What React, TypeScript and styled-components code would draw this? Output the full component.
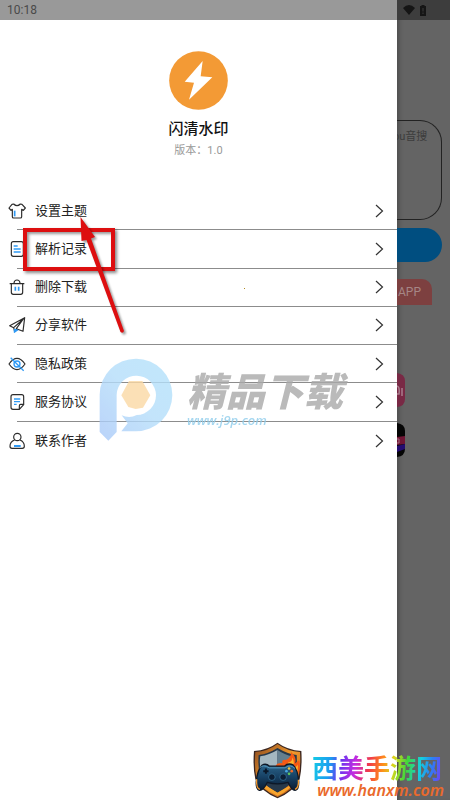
import React from "react";
import styled, { createGlobalStyle } from "styled-components";

const GlobalStyle = createGlobalStyle`
  * { box-sizing: border-box; }
  body {
    margin: 0;
    font-family: Roboto, "Noto Sans CJK SC", sans-serif;
    color: #222;
    background: #646464;
  }
`;

const Screen = styled.div`
  position: relative;
  display: flex;
  min-height: 100vh;
  overflow: hidden;
`;

const Drawer = styled.main`
  position: relative;
  flex: 1;
  min-width: 0;
  background: #fff;
`;

const StatusBar = styled.div<{ $dim?: boolean }>`
  display: flex;
  align-items: center;
  gap: 4px;
  height: 20px;
  padding: 0 ${(p) => (p.$dim ? "6px" : "7px")};
  background: ${(p) => (p.$dim ? "#3d3d3d" : "#999")};
  color: #4a4a4a;
  font-size: 12px;
  line-height: 20px;
`;

const Profile = styled.header`
  display: flex;
  flex-direction: column;
  align-items: center;
  padding: 31px 0;
`;

const AppName = styled.h1`
  margin: 8px 0 0;
  font-size: 15px;
  line-height: 22px;
  font-weight: 500;
  color: #111;
`;

const Version = styled.p`
  margin: 1px 0 0;
  font-size: 11px;
  line-height: 20px;
  color: #999;
`;

const Menu = styled.ul`
  display: grid;
  grid-template-rows: repeat(7, 1fr);
  height: 268px;
  margin: 0;
  padding: 0;
  list-style: none;
`;

const MenuItem = styled.li`
  display: flex;
  flex-direction: column;
`;

const MenuButton = styled.button`
  display: flex;
  flex: 1;
  align-items: center;
  gap: 9px;
  padding: 0 13px 0 8px;
  border: 0;
  background: none;
  color: #222;
  font: inherit;
  font-size: 13px;
  line-height: 20px;
  text-align: left;
`;

const Label = styled.span`
  flex: 1;
`;

const Divider = styled.hr`
  width: calc(100% - 17px);
  height: 1px;
  margin: 0 0 0 17px;
  border: 0;
  background: #8c8c8c;
`;

const Backdrop = styled.aside`
  width: 53px;
  background: #646464;
  box-shadow: inset 5px 0 4px -3px #4c4c4c;
  overflow: hidden;
`;

const LinkBox = styled.div`
  height: 100px;
  margin: 100px 8px 0 0;
  padding: 6px 0;
  border: 1px solid #222;
  border-left: 0;
  border-radius: 0 22px 22px 0;
  color: #3c3c3c;
  font-size: 11px;
  line-height: 20px;
  text-indent: -4px;
  white-space: nowrap;
  overflow: hidden;
`;

const ParseButton = styled.button`
  display: block;
  width: 45px;
  height: 34px;
  margin-top: 8px;
  border: 0;
  border-radius: 0 17px 17px 0;
  background: #004e80;
`;

const AppTag = styled.div`
  height: 26px;
  margin: 17px 18px 0 0;
  padding-left: 1px;
  border-radius: 0 10px 0 0;
  background: #7d4040;
  color: #a68686;
  font-size: 12px;
  line-height: 27px;
`;

const AppIcons = styled.div`
  display: flex;
  flex-direction: column;
  gap: 16px;
  margin-top: 68px;
`;

const RedBox = styled.div`
  position: absolute;
  left: 23px;
  top: 228px;
  width: 92px;
  height: 43px;
  border: 4px solid #dd0f10;
  box-shadow: 2px 2px 3px #0007, inset 2px 2px 3px #0006;
`;

const Arrow = styled.svg`
  position: absolute;
  left: 70px;
  top: 210px;
  filter: drop-shadow(2px 2px 1px #0006);
`;

const Speck = styled.span`
  position: absolute;
  left: 244px;
  top: 288px;
  width: 1px;
  height: 1px;
  background: #b08a20;
`;

const Watermark = styled.div`
  position: absolute;
  left: 99px;
  top: 358px;
  display: flex;
  gap: 14px;
  opacity: 0.8;
  pointer-events: none;
`;

const WatermarkText = styled.div`
  display: flex;
  flex-direction: column;
  padding-top: 10px;
  font-style: italic;
  white-space: nowrap;
`;

const WatermarkName = styled.span`
  font-family: "Noto Sans CJK SC", sans-serif;
  font-size: 39px;
  font-weight: 900;
  line-height: 43px;
  color: #a9a9a9;
`;

const WatermarkSite = styled.span`
  font-family: "Open Sans", sans-serif;
  font-size: 13px;
  font-weight: 600;
  line-height: 18px;
  color: #8fcdec;
`;

const Brand = styled.div`
  position: absolute;
  right: 4px;
  bottom: 0;
  display: flex;
  align-items: flex-start;
  gap: 9px;
`;

const BrandText = styled.div`
  display: flex;
  flex-direction: column;
  align-items: flex-end;
  padding-top: 8px;
  white-space: nowrap;
`;

const BrandName = styled.span`
  padding-top: 3px;
  margin-right: 4px;
  font-family: "Noto Sans CJK SC", sans-serif;
  font-size: 26px;
  font-weight: 700;
  line-height: 28px;
  color: transparent;
  background: linear-gradient(
    100deg,
    #14d0e4 0%, #1b9cf0 15%, #6a35f0 23%, #c42be0 34%, #f03a4a 44%,
    #ff8a1c 54%, #d8d81c 62%, #3fd83a 72%, #14cfe0 82%, #2a80f4 90%, #7a3cf4 100%
  );
  background-clip: text;
  -webkit-background-clip: text;
`;

const BrandSite = styled.span`
  padding-right: 2px;
  font-family: "Noto Sans", sans-serif;
  font-size: 16px;
  font-style: italic;
  font-weight: 600;
  line-height: 19px;
  color: #ea6a2c;
`;

const ink = "#2c2c2c";
const blue = "#2f9af5";

const shapes: Record<string, React.ReactNode> = {
  shirt: (
    <>
      <path d="M17 6 Q27 16 37 6 L42 7 L52 18 L46 25 L41 22 V44 Q41 48 37 48 H17 Q13 48 13 44 V22 L9 25 L3 18 L12 7Z" />
      <path d="M20 26 V43" stroke={blue} strokeWidth="5" />
    </>
  ),
  record: (
    <>
      <rect x="10" y="5" width="36" height="44" rx="6" />
      <path d="M17 18 H29 M17 27 H38 M17 36 H38" stroke={blue} strokeWidth="4" />
    </>
  ),
  trash: (
    <>
      <path d="M5 17 H49 M18 15 Q19 6 27 6 Q35 6 36 15 M10 17 V43 Q10 49 16 49 H38 Q44 49 44 43 V17" />
      <path d="M22 26 V38 M32 26 V38" stroke={blue} strokeWidth="5" />
    </>
  ),
  plane: (
    <>
      <path d="M50 5 L5 29 L17 35 L46 9 L25 38 L45 46 L50 5Z M17 35 L20 47 L26 39" />
      <path d="M19 40 V49 L29 42Z" fill={blue} stroke={blue} />
    </>
  ),
  eye: (
    <>
      <path d="M3 27 Q27 -7 51 27 Q27 61 3 27Z" />
      <circle cx="27" cy="27" r="9" stroke={blue} strokeWidth="4" />
      <path d="M8 8 L47 47" stroke={blue} strokeWidth="4" />
    </>
  ),
  terms: (
    <>
      <path d="M15 5 H41 Q47 5 47 11 V35 L34 49 H15 Q9 49 9 43 V11 Q9 5 15 5Z M47 34 H38 Q34 34 34 39 V48" />
      <path d="M18 18 H37 M18 26 H36 M18 34 H26" stroke={blue} strokeWidth="4" />
    </>
  ),
  person: (
    <>
      <circle cx="28" cy="15" r="11" />
      <path d="M20 24 Q6 29 6 43 Q6 49 12 49 H43 Q49 49 49 43 Q49 29 36 24" />
      <path d="M18 42 H38" stroke={blue} strokeWidth="6" />
    </>
  ),
};

const items = [
  { icon: "shirt", text: "设置主题" },
  { icon: "record", text: "解析记录" },
  { icon: "trash", text: "删除下载" },
  { icon: "plane", text: "分享软件" },
  { icon: "eye", text: "隐私政策" },
  { icon: "terms", text: "服务协议" },
  { icon: "person", text: "联系作者" },
];

const MenuIcon = ({ name }: { name: string }) => (
  <svg width="18" height="18" viewBox="0 0 54 54" fill="none" stroke={ink} strokeWidth="3.500" strokeLinejoin="round" aria-hidden="true">
    {shapes[name]}
  </svg>
);

const Chevron = () => (
  <svg width="9" height="14" viewBox="0 0 9 14" fill="none" stroke="#333" strokeWidth="1.200" aria-hidden="true">
    <path d="M1 1 L7.500 7 L1 13" />
  </svg>
);

const Bolt = () => (
  <svg width="59" height="59" viewBox="57 32 177 177" aria-hidden="true">
    <circle cx="145.500" cy="120.500" r="88" fill="#f39a35" />
    <path d="M158 62 L104 124 L132 127 L117 178 L187 111 L152 108Z" fill="#fff" />
  </svg>
);

const WatermarkLogo = () => (
  <svg width="74" height="83" viewBox="28 40 222 249" aria-hidden="true">
    <defs>
      <linearGradient id="wm" x1="0" y1="1" x2="1" y2="0">
        <stop offset="0" stopColor="#a9c8f8" />
        <stop offset="0.5" stopColor="#b5defb" />
        <stop offset="1" stopColor="#b3e1fb" />
      </linearGradient>
    </defs>
    <path
      d="M30 262 V150 A109 109 0 1 1 139 260 H95 L114 236 L96 212 Q120 222 141 211 A59 59 0 1 0 81 150 V262 L56 288Z"
      fill="url(#wm)"
    />
    <path d="M118 109 H158 L182 152 L160 189 L138 193 L116 187 L95 152Z" fill="#fbd9a4" />
  </svg>
);

const Shield = () => (
  <svg width="51" height="57" viewBox="38 18 154 172" aria-hidden="true">
    <defs>
      <linearGradient id="gold" x1="0" y1="0" x2="1" y2="1">
        <stop offset="0" stopColor="#8a4a20" />
        <stop offset="0.5" stopColor="#f29a2c" />
        <stop offset="1" stopColor="#b04a12" />
      </linearGradient>
      <linearGradient id="pad" x1="0" y1="0" x2="0" y2="1">
        <stop offset="0" stopColor="#2d668c" />
        <stop offset="0.5" stopColor="#164063" />
        <stop offset="1" stopColor="#0a1a30" />
      </linearGradient>
    </defs>
    <path d="M115 20 Q145 42 187 45 Q190 92 182 130 Q165 168 115 188 Q65 168 48 130 Q40 92 44 45 Q86 42 115 20Z" fill="#3a2620" />
    <path d="M115 24 Q145 46 183 48 Q186 92 178 128 Q161 164 115 184 Q69 164 52 128 Q44 95 48 48 Q86 46 115 24Z" fill="url(#gold)" />
    <path d="M115 36 Q145 54 173 57 Q175 95 167 124 Q153 154 115 171 Q77 154 63 124 Q55 95 58 57 Q86 54 115 36Z" fill="#26384a" />
    <path d="M115 42 V100 H64 Q60 80 63 61 Q90 57 115 42Z" fill="#a5b8c1" />
    <path d="M115 42 Q137 57 160 61 L134 100 H115Z" fill="#647f8f" />
    <path d="M108 92 Q114 80 130 82 Q126 70 140 72 Q157 66 156 48 Q174 64 168 82 L180 74 Q186 96 176 118 L152 104Z" fill="#f45a16" />
    <path d="M129 91 Q145 92 147 80 Q161 78 160 64 Q169 82 159 98 Q174 94 176 86 Q178 108 170 116Z" fill="#ffb52b" />
    <path d="M58 134 Q67 148 82 151 L115 171 L150 151 L168 134 Q154 164 115 180 Q72 160 58 134Z" fill="#f7a52d" />
    <path
      d="M68 88 Q80 81 91 91 H136 Q147 80 162 87 Q177 102 179 137 Q180 162 168 164 Q158 164 147 140 Q115 149 84 140 Q72 165 60 164 Q49 160 51 137 Q54 104 68 88Z"
      fill="url(#pad)"
      stroke="#0d1726"
      strokeWidth="4"
    />
    <path d="M61 96 Q72 84 90 96 H138 Q155 84 168 98" fill="none" stroke="#5798bb" strokeWidth="3" />
    <circle cx="98" cy="124" r="10" fill="#0b1e34" stroke="#397ba2" strokeWidth="2" />
    <circle cx="132" cy="124" r="10" fill="#0b1e34" stroke="#397ba2" strokeWidth="2" />
    <path d="M80 98 V114 M72 106 H88" stroke="#0a1728" strokeWidth="6" />
    <circle cx="150" cy="98" r="4" fill="#f6c53b" />
    <circle cx="142" cy="106" r="4" fill="#45a7e0" />
    <circle cx="158" cy="106" r="4" fill="#f06a2a" />
    <circle cx="150" cy="114" r="4" fill="#5ec55a" />
    <path d="M52 130 Q50 158 62 161 M178 132 Q180 156 168 161" fill="none" stroke="#f49a30" strokeWidth="4" />
  </svg>
);

export default function App() {
  return (
    <>
      <GlobalStyle />
      <Screen>
        <Drawer>
          <StatusBar>10:18</StatusBar>
          <Profile>
            <Bolt />
            <AppName>闪清水印</AppName>
            <Version>版本：1.0</Version>
          </Profile>
          <Menu>
            {items.map((item, i) => (
              <MenuItem key={item.icon}>
                <MenuButton type="button">
                  <MenuIcon name={item.icon} />
                  <Label>{item.text}</Label>
                  <Chevron />
                </MenuButton>
                {i < items.length - 1 && <Divider />}
              </MenuItem>
            ))}
          </Menu>
          <Speck />
          <Watermark>
            <WatermarkLogo />
            <WatermarkText>
              <WatermarkName>精品下载</WatermarkName>
              <WatermarkSite>www.j9p.com</WatermarkSite>
            </WatermarkText>
          </Watermark>
          <RedBox />
          <Arrow width="60" height="130" viewBox="0 0 60 130" aria-hidden="true">
            <path d="M10.500 7 L25 27 L21 28.500 L54 121 Q53 124 50.500 122 L16.500 30 L11.500 31Z" fill="#dd0f10" />
          </Arrow>
        </Drawer>
        <Backdrop>
          <StatusBar $dim>
            <svg width="12" height="10" viewBox="0 0 12 10" fill="#151515" aria-hidden="true">
              <path d="M0 3 Q6 -3 12 3 L6 10Z" />
            </svg>
            <svg width="8" height="11" viewBox="0 0 8 11" aria-hidden="true">
              <path d="M2.500 0 H5.500 V1 H7 V11 H1 V1 H2.500Z" fill="#151515" />
              <path d="M4 3 V6.500 M4 7.500 V9" stroke="#3d3d3d" />
            </svg>
          </StatusBar>
          <LinkBox>ou音搜</LinkBox>
          <ParseButton type="button" aria-label="解析" />
          <AppTag>APP</AppTag>
          <AppIcons>
            <svg width="8" height="34" viewBox="0 0 8 34" aria-hidden="true">
              <path d="M0 0 Q8 1 8 8 V26 Q8 33 0 34Z" fill="#792945" />
              <path d="M0 13 Q3 14 2 21 H0 M5 15 V23" fill="none" stroke="#a97c8d" strokeWidth="1.500" />
            </svg>
            <svg width="8" height="34" viewBox="0 0 8 34" aria-hidden="true">
              <path d="M0 0 Q8 1 8 8 V26 Q8 33 0 34Z" fill="#050505" />
              <path d="M0 14 L8 13 V21 L0 22Z" fill="#701534" />
              <path d="M0 23 L8 21 V26 L0 29Z" fill="#240c70" />
              <path d="M0 16 H2 V20 H0" fill="none" stroke="#a26a80" />
            </svg>
          </AppIcons>
        </Backdrop>
        <Brand>
          <Shield />
          <BrandText>
            <BrandName>西美手游网</BrandName>
            <BrandSite>www.hanxm.com</BrandSite>
          </BrandText>
        </Brand>
      </Screen>
    </>
  );
}
